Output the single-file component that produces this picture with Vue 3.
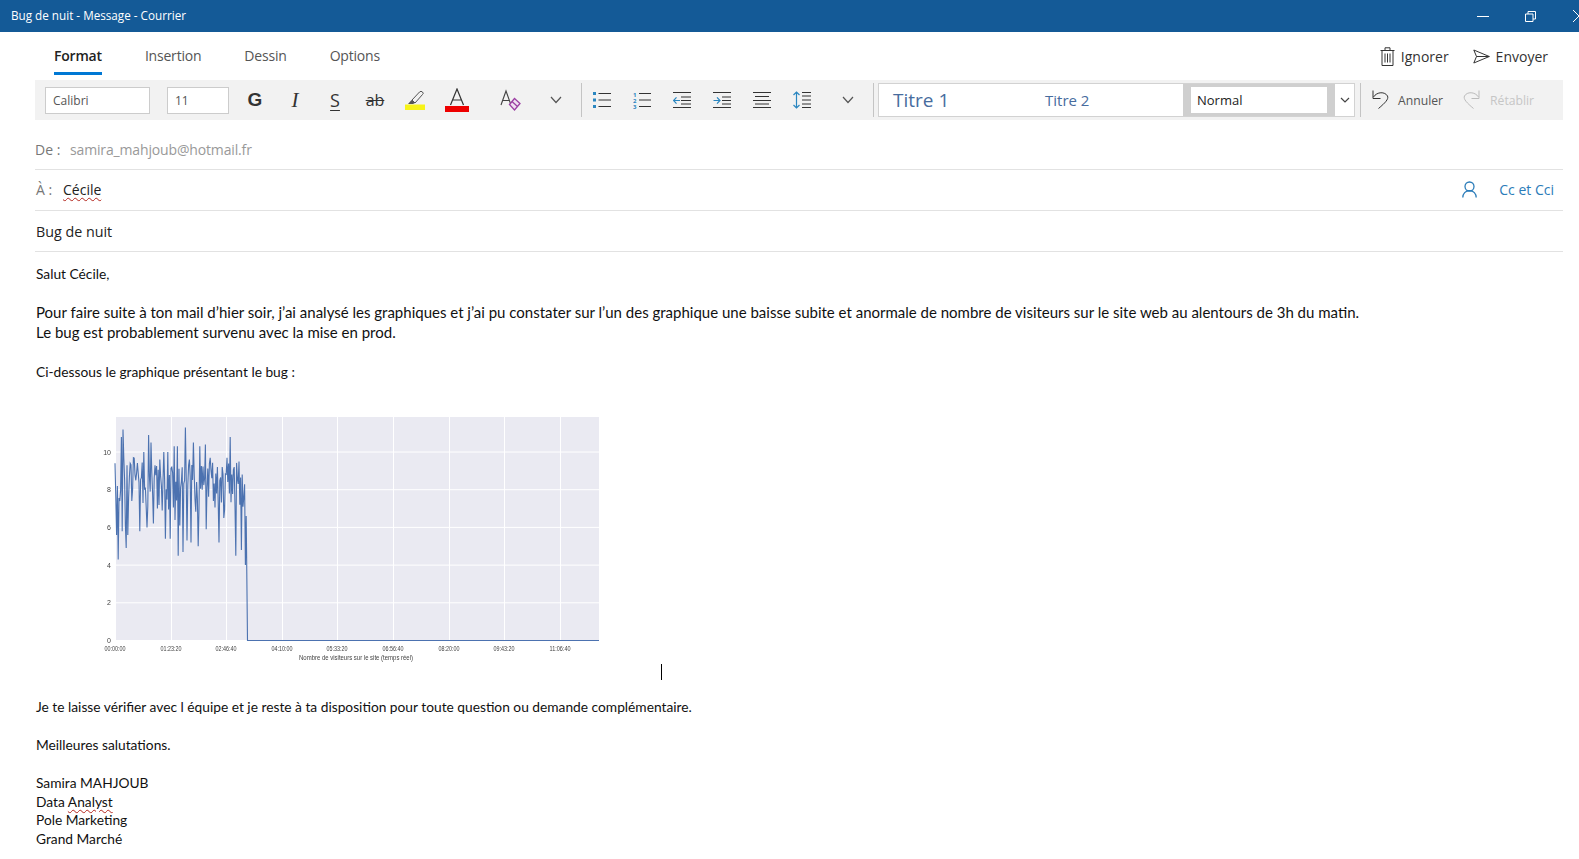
<template>
  <div class="window">
    <header class="titlebar">
      <span class="title">Bug de nuit  - Message - Courrier</span>
      <div class="win-controls">
        <svg class="win-min" width="12" height="12" viewBox="0 0 12 12"><path d="M0 6.5h12" stroke="#fff" fill="none" /></svg>
        <svg class="win-restore" width="11" height="11" viewBox="0 0 11 11"><path d="M.5 3h7.5v7.5H.5zM3 3V.5h7.5V8H8" stroke="#fff" fill="none" /></svg>
        <svg class="win-close" width="14" height="14" viewBox="0 0 14 14"><path d="M1 1l12 12M13 1L1 13" stroke="#fff" fill="none" /></svg>
      </div>
    </header>

    <nav class="tabs">
      <a v-for="tab in tabs" :key="tab" class="tab" :class="{ active: tab === 'Format' }">{{ tab }}</a>
      <div class="tab-actions">
        <button class="action">
          <svg width="15" height="19" viewBox="0 0 15 19" fill="none" stroke="#333"><path d="M.5 3.5h14M5 3V.8h5V3M2 3.5v15h11v-15M5 6.5v9M7.5 6.5v9M10 6.5v9" /></svg>
          Ignorer
        </button>
        <button class="action">
          <svg width="17" height="15" viewBox="0 0 17 15" fill="none" stroke="#333"><path d="M.8 1l15.5 6.5L.8 14l2.7-6.5zM3.5 7.5h12.8" /></svg>
          Envoyer
        </button>
      </div>
    </nav>

    <div class="toolbar">
      <div class="field font-name">Calibri</div>
      <div class="field font-size">11</div>
      <button class="tb bold">G</button>
      <button class="tb italic">I</button>
      <button class="tb under">S</button>
      <button class="tb strike">ab</button>
      <button class="tb">
        <svg width="22" height="24" viewBox="0 0 22 24"><path d="M8 12l7.5-8q1.5-1.5 3 0t0 2.5L11 15z" fill="none" stroke="#555" /><path d="M4 16l3.5-4 3.5 3-2 1z" fill="#555" /><rect x="1" y="16.5" width="20" height="5.5" fill="#f7f318" /></svg>
      </button>
      <button class="tb font-color">
        <svg width="24" height="24" viewBox="0 0 24 24"><path d="M5.5 17L12 1l6.5 16M7.5 12h9" fill="none" stroke="#333" stroke-width="1.2" /><rect y="18" x="0" width="24" height="6" fill="#ee0000" /></svg>
      </button>
      <button class="tb clear-format">
        <svg width="22" height="22" viewBox="0 0 22 22"><path d="M2 16L7 2l5 14M3.5 11.5h7" fill="none" stroke="#444" stroke-width="1.1" /><path d="M10.5 15.5l5-6 5.5 5-5.5 6.5z" fill="#efe0f0" stroke="#9c3fa3" stroke-width="1.3" /><path d="M13 12.5l5.5 5" stroke="#9c3fa3" stroke-width="1.3" /></svg>
      </button>
      <button class="tb chevron-btn">
        <svg width="12" height="8" viewBox="0 0 12 8"><path d="M1 1l5 5.5L11 1" fill="none" stroke="#555" stroke-width="1.2" /></svg>
      </button>
      <span class="sep first-sep"></span>
      <button class="tb list-btn">
        <svg width="18" height="18" viewBox="0 0 18 18"><path d="M0 1h3v3H0zM0 7.5h3v3H0zM0 14h3v3H0z" fill="#2a86c0" /><path d="M5.5 2.5H18M5.5 9H18M5.5 15.5H18" stroke="#333" /></svg>
      </button>
      <button class="tb list-btn">
        <svg width="18" height="18" viewBox="0 0 18 18"><text x="0" y="5.5" class="num">1</text><text x="0" y="11.5" class="num">2</text><text x="0" y="17.5" class="num">3</text><path d="M6 2.5h12M6 9h12M6 15.5h12" stroke="#333" /></svg>
      </button>
      <button class="tb list-btn">
        <svg width="18" height="18" viewBox="0 0 18 18"><path d="M0 1.5h18M0 16.5h18M8 6h10M8 9.5h10M8 13h10" stroke="#333" /><path d="M7 9.5H.5M3.5 6.3L.5 9.5l3 3.2" fill="none" stroke="#2a86c0" stroke-width="1.2" /></svg>
      </button>
      <button class="tb list-btn">
        <svg width="18" height="18" viewBox="0 0 18 18"><path d="M0 1.5h18M0 16.5h18M9 6h9M9 9.5h9M9 13h9" stroke="#333" /><path d="M.5 9.5H7M4 6.3l3 3.2-3 3.2" fill="none" stroke="#2a86c0" stroke-width="1.2" /></svg>
      </button>
      <button class="tb list-btn">
        <svg width="18" height="18" viewBox="0 0 18 18"><path d="M0 1.5h18M2 5.5h14M0 9.5h18M2 13h14M0 16.5h18" stroke="#333" /></svg>
      </button>
      <button class="tb list-btn">
        <svg width="18" height="18" viewBox="0 0 18 18"><path d="M9 1.5h9M9 5h9M9 9h9M9 13h9M9 16.5h9" stroke="#333" /><path d="M3.5 1v16M.5 4L3.5 1l3 3M.5 14l3 3 3-3" fill="none" stroke="#2a86c0" stroke-width="1.2" /></svg>
      </button>
      <button class="tb chevron-btn2">
        <svg width="12" height="8" viewBox="0 0 12 8"><path d="M1 1l5 5.5L11 1" fill="none" stroke="#555" stroke-width="1.2" /></svg>
      </button>
      <span class="sep"></span>
      <div class="styles">
        <div class="style-plain">
          <span class="titre1">Titre 1</span>
          <span class="titre2">Titre 2</span>
        </div>
        <div class="style-selected"><span>Normal</span></div>
        <div class="style-more">
          <svg width="10" height="6" viewBox="0 0 10 6"><path d="M1 1l4 4 4-4" fill="none" stroke="#444" stroke-width="1.2" /></svg>
        </div>
      </div>
      <span class="sep undo-sep"></span>
      <button class="history">
        <svg width="18" height="20" viewBox="0 0 18 20"><path d="M1 .5v8h7.5M1.5 7C5 1.5 13 1.5 15.5 6c1.5 3-2.5 7-9 12.5" fill="none" stroke="#333" /></svg>
        Annuler
      </button>
      <button class="history disabled">
        <svg width="18" height="20" viewBox="0 0 18 20"><path d="M17 .5v8H9.5M16.5 7C13 1.5 5 1.5 2.5 6c-1.5 3 2.5 7 9 12.5" fill="none" stroke="#bbb" /></svg>
        Rétablir
      </button>
    </div>

    <section class="head">
      <div class="row from">
        <span class="label">De :</span>
        <span class="sender">samira_mahjoub@hotmail.fr</span>
      </div>
      <div class="row to">
        <span class="label">À :</span>
        <span class="recipient"><span class="typo">Cécile</span></span>
        <svg class="person" width="15" height="17" viewBox="0 0 15 17" fill="none" stroke="#2b7cb9" stroke-width="1.3"><circle cx="7.5" cy="5.5" r="4.5" /><path d="M.8 16.5c0-4 2.7-6.8 6.7-6.8s6.7 2.8 6.7 6.8" /></svg>
        <span class="cc">Cc et Cci</span>
      </div>
      <div class="row subject">Bug de nuit</div>
    </section>

    <main class="body">
      <p class="first">Salut Cécile,</p>
      <p class="blank"></p>
      <p class="big">Pour faire suite à ton mail d’hier soir, j’ai analysé les graphiques et j’ai pu constater sur l’un des graphique une baisse subite et anormale de nombre de visiteurs sur le site web au alentours de 3h du matin.</p>
      <p class="big">Le bug est probablement survenu avec la mise en prod.</p>
      <p class="blank"></p>
      <p>Ci-dessous le graphique présentant le bug :</p>

      <div class="chart-row">
        <svg class="chart" width="520" height="260" viewBox="100 410 520 260">
          <rect x="115" y="417" width="484" height="224" fill="#eaeaf2" />
          <path v-for="x in xTicks" :key="x.label" :d="`M${x.pos} 417V641`" stroke="#fff" />
          <path v-for="y in yTicks" :key="y.label" :d="`M115 ${y.pos}H599`" stroke="#fff" />
          <polyline :points="linePoints" fill="none" stroke="#4c72b0" stroke-width="1.1" />
          <text v-for="x in xTicks" :key="x.label" :x="x.pos - 11" y="651" class="tick" textLength="21" lengthAdjust="spacingAndGlyphs">{{ x.label }}</text>
          <text v-for="y in yTicks" :key="y.label" x="111" :y="y.pos + 2.5" class="tick" text-anchor="end">{{ y.label }}</text>
          <text x="299" y="660" class="tick" textLength="114" lengthAdjust="spacingAndGlyphs">Nombre de visiteurs sur le site (temps réel)</text>
        </svg>
        <span class="caret"></span>
      </div>

      <p>Je te laisse vérifier avec l équipe et je reste à ta disposition pour toute question ou demande complémentaire.</p>
      <p class="blank"></p>
      <p>Meilleures salutations.</p>
      <p class="blank"></p>
      <div class="signature">
        <p>Samira MAHJOUB</p>
        <p>Data <span class="typo">Analyst</span></p>
        <p>Pole Marketing</p>
        <p>Grand Marché</p>
      </div>
    </main>
  </div>
</template>

<script setup>
const tabs = ['Format', 'Insertion', 'Dessin', 'Options']

const xLabels = ['00:00:00', '01:23:20', '02:46:40', '04:10:00', '05:33:20', '06:56:40', '08:20:00', '09:43:20', '11:06:40']
const xTicks = xLabels.map((label, i) => ({ label, pos: Math.round(115 + i * 55.6) + 0.5 }))
const yTicks = [0, 2, 4, 6, 8, 10].map((v) => ({ label: String(v), pos: 640.5 - v * 18.85 }))

// visitor counts, noisy until the drop around 03:00
const STEP = 0.8
const peaks = [
  [115, 9.4], [116.5, 5.6], [117.4, 8.2], [118, 4.3], [120, 7.4], [121, 10.8], [122, 5.8], [122.7, 11.2], [123.5, 9.7],
  [125, 6.1], [126, 4.9], [127, 9.3], [128, 5.6], [130, 9.4], [132, 7.4], [133, 9.7], [139.5, 5.8], [144, 10], [147, 6],
  [148.7, 10.9], [150, 7.9], [151, 10.5], [153, 6.2], [157, 7], [160, 9.6], [162, 6.9], [164, 10], [165, 5.4], [168, 10],
  [170, 5.4], [172, 9.2], [174, 10.3], [175, 6.4], [177, 10.3], [178, 4.5], [180, 6.1], [183, 4.7], [185, 11.3], [187, 5.3],
  [189, 9.6], [191, 5.2], [193, 10.5], [195, 7.5], [198, 5], [200, 10.3], [202, 8], [205, 10.4], [206, 5.9], [210, 9.7],
  [213, 7.4], [217, 9.2], [219, 5.2], [222, 9.2], [224, 6.5], [227, 9.7], [229, 7.8], [230, 10.8], [232, 8.8], [234, 9.2],
  [235, 7.1], [236, 4.5], [238, 8.3], [239, 9.5], [240, 7.2], [241, 4.8], [242, 8.8], [243, 7.1], [244, 7.6], [245, 5],
  [245.6, 4], [246.3, 6.6],
]
const values = []
let seed = 4242
for (let i = 0; (115 + i * STEP) < 246.5; i++) {
  seed = (seed * 1103 + 12345) % 65536
  const noise = seed / 65536
  values.push(i % 2 ? 6.8 + noise * 2.2 : 8 + noise * 1.8)
}
peaks.forEach(([x, v]) => { values[Math.round((x - 115) / STEP)] = v })
const toY = (v) => (640.5 - v * 18.85).toFixed(1)
const points = values.map((v, i) => `${(115 + i * STEP).toFixed(1)},${toY(v)}`)
points.push(`247.5,${toY(0)}`, `599,${toY(0)}`)
const linePoints = points.join(' ')
</script>

<style scoped>
.window {
  width: 1579px;
  height: 859px;
  overflow: hidden;
  background: #fff;
  font-family: "Open Sans", "Noto Sans", sans-serif;
  color: #222;
}

button {
  border: 0;
  background: none;
  padding: 0;
  font: inherit;
  color: inherit;
  display: flex;
  align-items: center;
  justify-content: center;
}

/* title bar */
.titlebar {
  height: 32px;
  background: #145a97;
  color: #fff;
  display: flex;
  align-items: center;
  padding-left: 11px;
  font-size: 11.7px;
  white-space: pre;
}

.title {
  margin-top: -2px;
}

.win-controls {
  margin-left: auto;
  display: flex;
  align-items: center;
  height: 100%;
}

.win-min {
  margin-right: 36px;
}

.win-restore {
  margin-right: 36px;
}

.win-close {
  margin-right: -7px;
}

/* tabs */
.tabs {
  height: 48px;
  display: flex;
  align-items: flex-start;
  padding-left: 54px;
  font-size: 14px;
  letter-spacing: -0.2px;
}

.tab {
  height: 43px;
  margin-right: 43px;
  padding-top: 14px;
  color: #555;
  box-sizing: border-box;
}

.tab.active {
  color: #222;
  font-weight: 600;
  border-bottom: 3px solid #0078d4;
}

.tab-actions {
  margin-left: auto;
  display: flex;
  padding-right: 31px;
  gap: 24px;
  padding-top: 13px;
}

.action {
  gap: 6px;
  color: #333;
  height: 22px;
}

/* toolbar */
.toolbar {
  height: 40px;
  margin: 0 16px 0 35px;
  background: #f2f2f2;
  display: flex;
  align-items: center;
  padding-left: 10px;
}

.field {
  height: 27px;
  background: #fff;
  border: 1px solid #ccc;
  box-sizing: border-box;
  font-size: 12px;
  color: #555;
  display: flex;
  align-items: center;
  padding-left: 7px;
}

.font-name {
  width: 105px;
  margin-right: 17px;
}

.font-size {
  width: 62px;
  margin-right: 6px;
}

.tb {
  width: 40px;
  height: 40px;
  flex: none;
  color: #333;
}

.bold {
  font-weight: 700;
  font-size: 19px;
  font-family: "Liberation Sans", sans-serif;
}

.italic {
  font-family: "Liberation Serif", serif;
  font-style: italic;
  font-size: 21px;
}

.under {
  font-size: 18px;
  text-decoration: underline;
  text-underline-offset: 3px;
}

.strike {
  font-size: 16px;
  text-decoration: line-through;
}

.font-color {
  margin-left: 2px;
}

.clear-format {
  margin-left: 13px;
}

.chevron-btn {
  margin-left: 6px;
}

.sep {
  width: 1px;
  height: 34px;
  background: #c4c4c4;
  flex: none;
}

.first-sep {
  margin-left: 5px;
  margin-right: 0;
}

.list-btn svg {
  display: block;
}

.num {
  font-size: 6px;
  font-weight: 700;
  fill: #2a86c0;
  font-family: "Open Sans", sans-serif;
}

.chevron-btn2 {
  margin-left: 6px;
  margin-right: 5px;
}

.styles {
  margin-left: 4px;
  width: 477px;
  height: 34px;
  display: flex;
  border: 1px solid #d2d2d2;
  box-sizing: border-box;
  background: #fff;
  flex: none;
}

.style-plain {
  width: 304px;
  display: flex;
  align-items: center;
  color: #476c9e;
}

.titre1 {
  font-size: 19px;
  margin-left: 14px;
  width: 152px;
}

.titre2 {
  font-size: 15px;
}

.style-selected {
  width: 152px;
  background: #fff;
  border: 8px solid #cfcfcf;
  border-width: 3px 8px;
  box-sizing: border-box;
  font-size: 13px;
  display: flex;
  align-items: center;
  padding-left: 6px;
  color: #222;
}

.style-more {
  flex: 1;
  display: flex;
  align-items: center;
  justify-content: center;
}

.undo-sep {
  margin-left: 5px;
  margin-right: 11px;
}

.history {
  gap: 8px;
  font-size: 12.2px;
  color: #555;
  margin-right: 19px;
}

.history.disabled {
  color: #c6c6c6;
  gap: 10px;
}

/* header fields */
.row {
  margin: 0 16px 0 35px;
  border-bottom: 1px solid #e2e2e2;
  display: flex;
  align-items: center;
  box-sizing: border-box;
  font-size: 14px;
}

.from {
  height: 50px;
  padding-top: 9px;
}

.to {
  height: 41px;
  padding-bottom: 2px;
}

.subject {
  height: 41px;
  padding-left: 1px;
  font-size: 14.3px;
  color: #222;
}

.label {
  color: #777;
}

.from .label {
  width: 35px;
}

.to .label {
  width: 28px;
  padding-left: 1px;
  box-sizing: border-box;
}

.sender {
  color: #999;
  letter-spacing: -0.15px;
}

.person {
  margin-left: auto;
}

.cc {
  margin-left: 22px;
  margin-right: 9px;
  color: #2b7cb9;
}

.typo {
  text-decoration: underline wavy #b3261e 1px;
  text-underline-offset: 2px;
}

/* message body */
.body {
  padding: 12px 0 0 36px;
  font-family: Lato, "Open Sans", sans-serif;
  font-size: 13.75px;
  line-height: 19px;
  color: #111;
}

p {
  margin: 0;
  white-space: nowrap;
}

.blank {
  height: 19px;
}

.big {
  font-size: 15px;
  line-height: 20px;
}

.big + .blank {
  height: 20px;
}

.chart-row {
  display: flex;
  width: 640px;
  height: 270px;
  margin: 29px 0 17px 64px;
}

.chart {
  flex: none;
  align-self: flex-start;
  filter: blur(0.3px);
}

.tick {
  font-family: "Liberation Sans", sans-serif;
  font-size: 7px;
  fill: #444;
}

.caret {
  width: 1px;
  height: 16px;
  background: #000;
  align-self: flex-end;
  margin-left: 41px;
}

.signature {
  line-height: 18.5px;
  padding-top: 1px;
}
</style>

<style>
html,
body {
  margin: 0;
  overflow: hidden;
}
</style>
